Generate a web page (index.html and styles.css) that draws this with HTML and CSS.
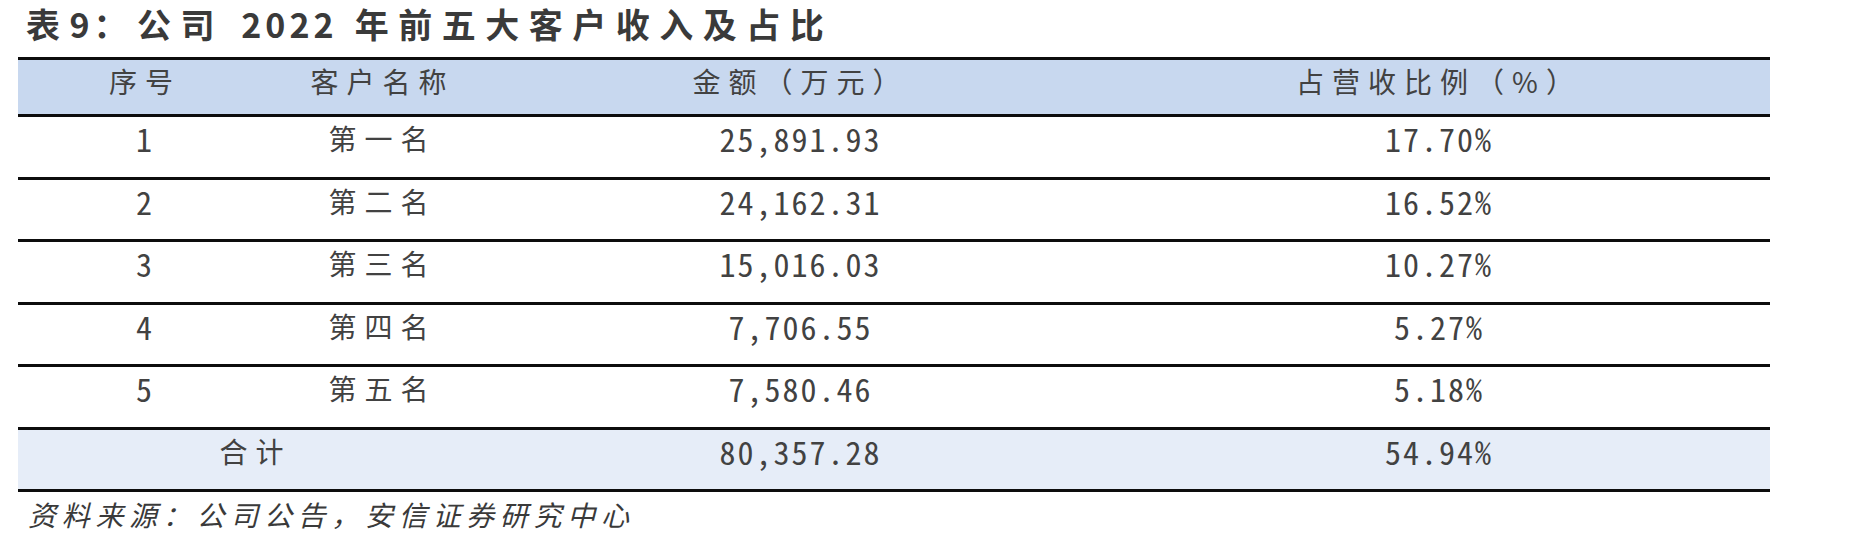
FILE: index.html
```html
<!DOCTYPE html>
<html lang="zh-CN">
<head>
<meta charset="utf-8">
<title>表9：公司 2022 年前五大客户收入及占比</title>
<link rel="stylesheet" href="styles.css">
</head>
<body>
<div class="page">
  <h1 class="title">表<span class="tnum">9</span>：公司 <span class="tnum">2022</span> 年前五大客户收入及占比</h1>
  <table class="data">
    <colgroup>
      <col class="c1"><col class="c2"><col class="c3"><col class="c4">
    </colgroup>
    <thead>
      <tr class="head">
        <th class="cjk">序号</th>
        <th class="cjk">客户名称</th>
        <th class="cjk">金额（万元）</th>
        <th class="cjk">占营收比例（%）</th>
      </tr>
    </thead>
    <tbody>
      <tr><td class="num">1</td><td class="cjk">第一名</td><td class="num">25,891.93</td><td class="num">17.70%</td></tr>
      <tr><td class="num">2</td><td class="cjk">第二名</td><td class="num">24,162.31</td><td class="num">16.52%</td></tr>
      <tr><td class="num">3</td><td class="cjk">第三名</td><td class="num">15,016.03</td><td class="num">10.27%</td></tr>
      <tr><td class="num">4</td><td class="cjk">第四名</td><td class="num">7,706.55</td><td class="num">5.27%</td></tr>
      <tr><td class="num">5</td><td class="cjk">第五名</td><td class="num">7,580.46</td><td class="num">5.18%</td></tr>
      <tr class="total"><td class="cjk" colspan="2">合计</td><td class="num">80,357.28</td><td class="num">54.94%</td></tr>
    </tbody>
  </table>
  <p class="source">资料来源：公司公告，安信证券研究中心</p>
</div>
</body>
</html>
```

FILE: styles.css
```css
html, body {
  margin: 0;
  padding: 0;
  background: #ffffff;
}

.page {
  padding: 0 0 0 18px;
  font-family: "Noto Sans CJK SC", "Noto Sans", sans-serif;
  color: #3f3f3f;
}

.title {
  margin: 0 0 9px 8px;
  font-size: 34px;
  line-height: 48px;
  font-weight: 700;
  letter-spacing: 9.5px;
  color: #3a3a3a;
  white-space: nowrap;
}

.tnum {
  letter-spacing: 4px;
}

.data {
  width: 1752px;
  border-collapse: collapse;
  table-layout: fixed;
}

.c1 { width: 254px; }
.c2 { width: 221px; }
.c3 { width: 615px; }
.c4 { width: 662px; }

.data tr {
  border-top: 3px solid #0d0d0d;
}

.data tbody tr:last-child {
  border-bottom: 3px solid #0d0d0d;
}

.data th,
.data td {
  height: 62.5px;
  padding: 1px 0 0 0;
  box-sizing: border-box;
  vertical-align: top;
  text-align: center;
  font-weight: 400;
  line-height: 40px;
  color: #424242;
}

.data th {
  height: 57px;
}

.head {
  background: #c8d8ef;
}

.total {
  background: #e6edf8;
}

.cjk {
  font-size: 28px;
  letter-spacing: 8px;
}

.num {
  font-size: 32px;
  letter-spacing: 2px;
  font-feature-settings: "hwid" 1;
}

.source {
  margin: 2px 0 0 10px;
  font-size: 28px;
  line-height: 40px;
  letter-spacing: 5.7px;
  font-style: italic;
  color: #3a3a3a;
  white-space: nowrap;
}
```
